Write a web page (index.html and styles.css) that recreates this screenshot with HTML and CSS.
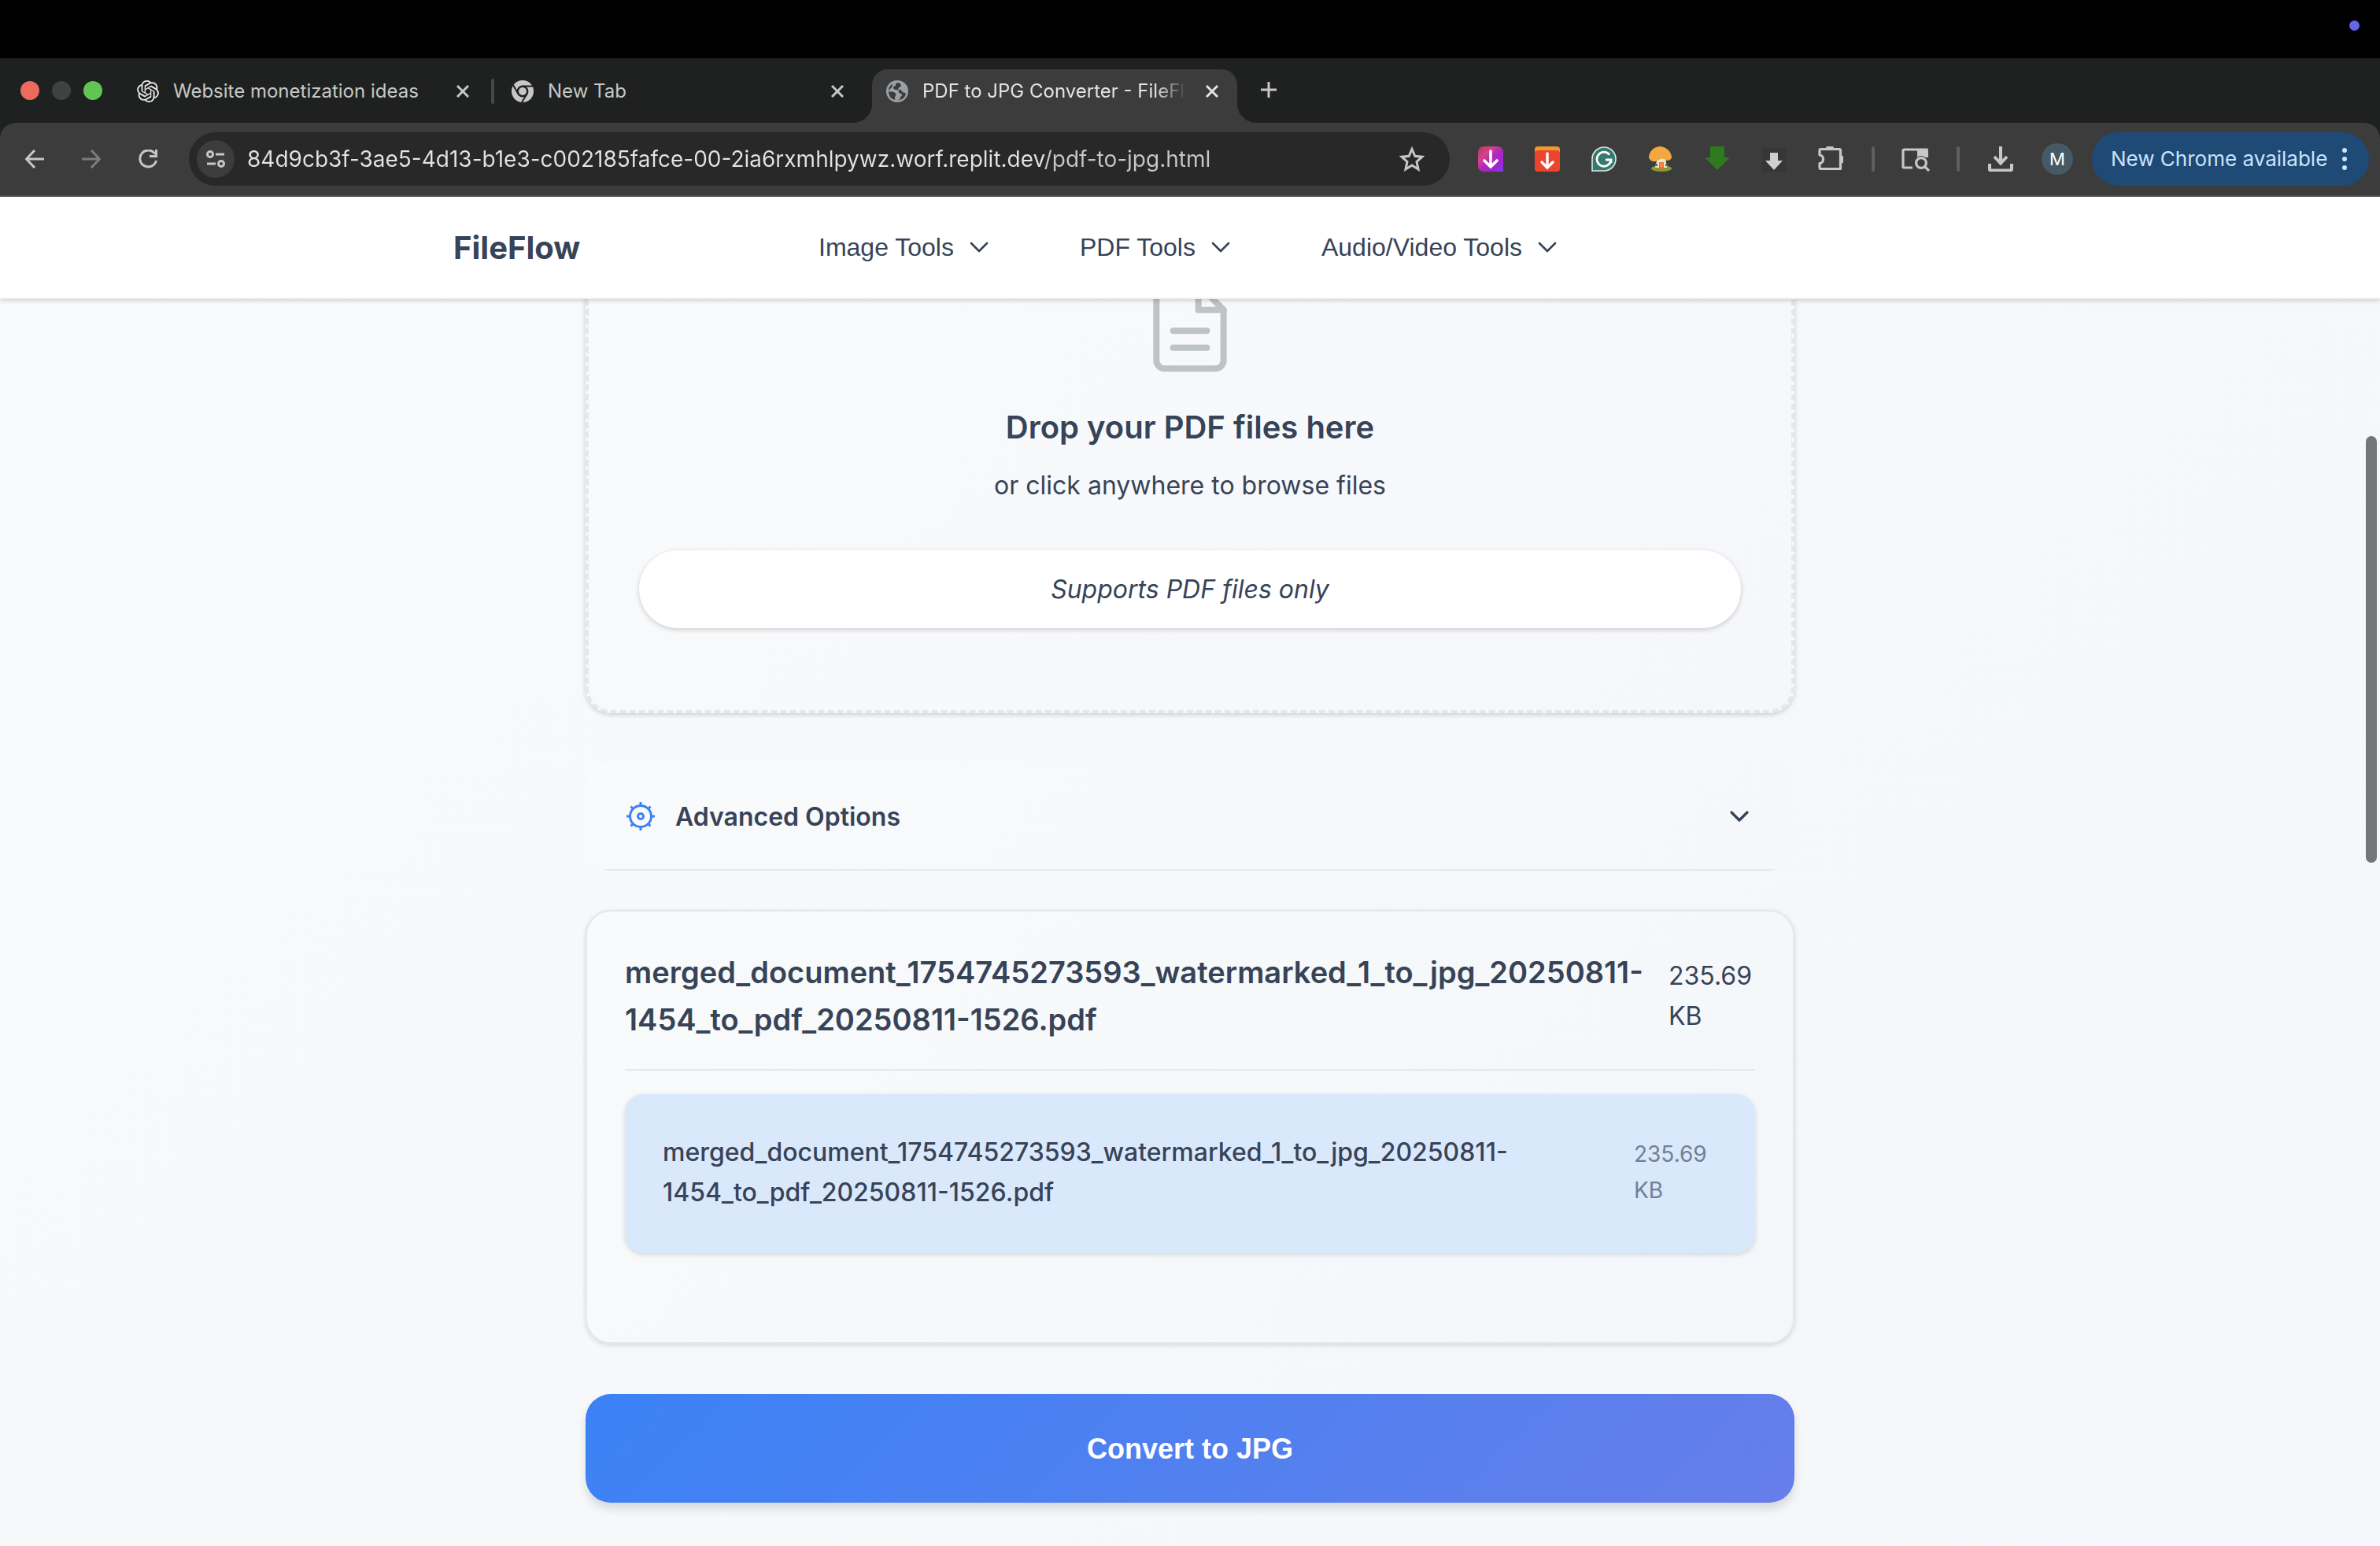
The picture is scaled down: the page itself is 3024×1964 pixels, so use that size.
FILE: index.html
```html
<!DOCTYPE html>
<html lang="en">
<head>
<meta charset="utf-8">
<title>PDF to JPG Converter - FileFlow</title>
<link rel="stylesheet" href="styles.css">
</head>
<body>
<div class="menubar"><span class="menubar-dot"></span></div>

<div class="tabstrip">
  <div class="lights">
    <span class="light light-close"></span>
    <span class="light light-min"></span>
    <span class="light light-max"></span>
  </div>
  <div class="tabs">
    <div class="tab tab-first">
      <svg class="favicon" viewBox="0 0 24 24" fill="#e8e8e8"><path d="M22.2819 9.8211a5.9847 5.9847 0 0 0-.5157-4.9108 6.0462 6.0462 0 0 0-6.5098-2.9A6.0651 6.0651 0 0 0 4.9807 4.1818a5.9847 5.9847 0 0 0-3.9977 2.9 6.0462 6.0462 0 0 0 .7427 7.0966 5.98 5.98 0 0 0 .511 4.9107 6.051 6.051 0 0 0 6.5146 2.9001A5.9847 5.9847 0 0 0 13.2599 24a6.0557 6.0557 0 0 0 5.7718-4.2058 5.9894 5.9894 0 0 0 3.9977-2.9001 6.0557 6.0557 0 0 0-.7475-7.0729zm-9.022 12.6081a4.4755 4.4755 0 0 1-2.8764-1.0408l.1419-.0804 4.7783-2.7582a.7948.7948 0 0 0 .3927-.6813v-6.7369l2.02 1.1686a.071.071 0 0 1 .038.052v5.5826a4.504 4.504 0 0 1-4.4945 4.4944zm-9.6607-4.1254a4.4708 4.4708 0 0 1-.5346-3.0137l.142.0852 4.783 2.7582a.7712.7712 0 0 0 .7806 0l5.8428-3.3685v2.3324a.0804.0804 0 0 1-.0332.0615L9.74 19.9502a4.4992 4.4992 0 0 1-6.1408-1.6464zM2.3408 7.8956a4.485 4.485 0 0 1 2.3655-1.9728V11.6a.7664.7664 0 0 0 .3879.6765l5.8144 3.3543-2.0201 1.1685a.0757.0757 0 0 1-.071 0l-4.8303-2.7865A4.504 4.504 0 0 1 2.3408 7.872zm16.5963 3.8558L13.1038 8.364 15.1192 7.2a.0757.0757 0 0 1 .071 0l4.8303 2.7913a4.4944 4.4944 0 0 1-.6765 8.1042v-5.6772a.79.79 0 0 0-.407-.667zm2.0107-3.0231l-.142-.0852-4.7735-2.7818a.7759.7759 0 0 0-.7854 0L9.409 9.2297V6.8974a.0662.0662 0 0 1 .0284-.0615l4.8303-2.7866a4.4992 4.4992 0 0 1 6.6802 4.66zM8.3065 12.863l-2.02-1.1638a.0804.0804 0 0 1-.038-.0567V6.0742a4.4992 4.4992 0 0 1 7.3757-3.4537l-.142.0805L8.704 5.459a.7948.7948 0 0 0-.3927.6813zm1.0976-2.3654l2.602-1.4998 2.6069 1.4998v2.9994l-2.5974 1.4997-2.6067-1.4997Z"/></svg>
      <span class="tab-title">Website monetization ideas</span>
      <button class="tab-close" aria-label="Close tab"><svg viewBox="0 0 16 16"><path d="M1 1l14 14M15 1L1 15"/></svg></button>
    </div>
    <div class="tab">
      <svg class="favicon" viewBox="0 0 28 28"><circle cx="14" cy="14" r="14" fill="#c7c7c7"/><g fill="none" stroke="#1f2120" stroke-width="2"><path d="M14 7.500H27M8.400 17.200L1.900 6M19.600 17.200L13 28"/></g><circle cx="14" cy="14" r="7.500" fill="#1f2120"/><circle cx="14" cy="14" r="5" fill="#c7c7c7"/></svg>
      <span class="tab-title">New Tab</span>
      <button class="tab-close" aria-label="Close tab"><svg viewBox="0 0 16 16"><path d="M1 1l14 14M15 1L1 15"/></svg></button>
    </div>
    <div class="tab tab-active">
      <svg class="favicon" viewBox="0 0 28 28"><circle cx="14" cy="14" r="14" fill="#9aa0a6"/><path d="M16 3c-3 0-4 1-4 3s-3 1-3 3 1 3 4 3 3 1 3 3 3 1 4 3-2 2-2 4-1 3-4 3c4 1 10-2 11-8-1-2-4-1-5-3s-2-2-4-2 0-3 2-4 1-3-2-5zM3 14c3 1 8 0 9 3s-1 3-1 5 0 3 1 3C6 24 3 20 3 14zM9 4C5 6 3 9 3 13c2-2 3-3 4-4s0-3 2-5z" fill="#3c3c3c"/></svg>
      <span class="tab-title">PDF to JPG Converter - FileFlow</span>
      <button class="tab-close" aria-label="Close tab"><svg viewBox="0 0 16 16"><path d="M1 1l14 14M15 1L1 15"/></svg></button>
    </div>
  </div>
  <button class="new-tab" aria-label="New tab"><svg viewBox="0 0 20 20"><path d="M10 0v20M0 10h20"/></svg></button>
</div>

<div class="toolbar-wrap">
<div class="toolbar">
  <div class="tool-group">
    <button class="tool" aria-label="Back"><svg viewBox="0 0 24 24" class="line"><path d="M24 12H2M12 1L1.500 12 12 23"/></svg></button>
    <button class="tool tool-off" aria-label="Forward"><svg viewBox="0 0 24 24" class="line"><path d="M0 12h22M12 1l10.500 11L12 23"/></svg></button>
    <button class="tool" aria-label="Reload"><svg viewBox="0 0 24 24" class="line"><path d="M21 5.500A10.500 10.500 0 1 0 22.500 14"/><path d="M22.500 0v8.500H14"/></svg></button>
  </div>
  <div class="omnibox">
    <button class="site-info" aria-label="Site information"><svg viewBox="0 0 24 24" class="line"><circle cx="5" cy="6" r="3.500"/><path d="M12 6h11M1 18h11"/><circle cx="19" cy="18" r="3.500"/></svg></button>
    <input class="url" type="text" aria-label="Address" value="84d9cb3f-3ae5-4d13-b1e3-c002185fafce-00-2ia6rxmhlpywz.worf.replit.dev/pdf-to-jpg.html">
    <button class="star" aria-label="Bookmark this page"><svg viewBox="0 0 32 32" class="line"><path d="M16 3.500l3.800 8.800 9.200.9-7 6.300 2 9.500-8-5-8 5 2-9.500-7-6.300 9.200-.9z"/></svg></button>
  </div>
  <div class="tool-group">
    <button class="tool" aria-label="Media downloader"><svg class="ext" viewBox="0 0 32 32"><defs><linearGradient id="ig" x1="0" y1="0" x2="1" y2="1"><stop offset="0" stop-color="#b5365c"/><stop offset=".3" stop-color="#d8418a"/><stop offset=".5" stop-color="#b129bd"/><stop offset=".75" stop-color="#a024cf"/><stop offset="1" stop-color="#7a3cf5"/></linearGradient></defs><path d="M7 0h18a7 7 0 0 1 7 7v25H7a7 7 0 0 1-7-7V7a7 7 0 0 1 7-7z" fill="url(#ig)"/><path d="M16 6v20M8 18l8 8 8-8" fill="none" stroke="#fff" stroke-width="3.600" stroke-linecap="round"/></svg></button>
    <button class="tool" aria-label="Video downloader"><svg class="ext" viewBox="0 0 32 32"><rect width="32" height="20" rx="4" fill="#ee9a30"/><rect y="5" width="32" height="27" rx="4" fill="#ec452d"/><path d="M16 9v17M9 20l7 7 7-7" fill="none" stroke="#fff" stroke-width="3.400" stroke-linecap="round"/></svg></button>
    <button class="tool" aria-label="Writing assistant"><svg class="ext" viewBox="0 0 32 32"><path d="M1 31V16a15 15 0 1 1 15 15z" fill="#357a6c" stroke="#dfe9e7" stroke-width="1.600"/><path d="M23 10.500a9 9 0 1 0 2 6.500h-7M25 17v4" fill="none" stroke="#fff" stroke-width="2.800"/></svg></button>
    <button class="tool" aria-label="Mushroom"><svg class="ext" viewBox="0 0 32 32"><ellipse cx="17" cy="28" rx="13" ry="4" fill="#8b9a2e"/><path d="M12 14h10l2 13H9z" fill="#eee3cd"/><path d="M1 13C2 5 9 0 15 0s14 5 15 13c0 4-3 5-7 5-2-2-5-3-7-2-2 1-4 2-6 3-5 1-9-2-9-6z" fill="#f2a741"/><rect x="14" y="20" width="6" height="9" fill="#ef6b3f"/><path d="M9 22h3v3H9zM22 22h3v3h-3z" fill="#2f7f7a"/><path d="M15 22h4M15 25h4" stroke="#f7c35c"/></svg></button>
    <button class="tool" aria-label="Green downloader"><svg class="ext" viewBox="0 0 32 32"><path d="M7 0h18v14h7L16 30 0 14h7z" fill="#2f7a1f"/></svg></button>
    <button class="tool" aria-label="Grey downloader"><svg class="ext" viewBox="0 0 32 32"><rect x="1" y="2" width="30" height="30" rx="3" fill="#363636"/><path d="M11 8h10v10h6L16 30 5 18h6z" fill="#cfcfcf"/></svg></button>
    <button class="tool" aria-label="Extensions"><svg class="ext" viewBox="0 0 32 32"><path d="M2 5a1.500 1.500 0 0 1 1.500-1.500H27A1.500 1.500 0 0 1 28.500 5v23.500H3.500A1.500 1.500 0 0 1 2 27v-5.500c6 0 6-10.500 0-10.500z" fill="none" stroke="#c7c7c7" stroke-width="3.200" stroke-linejoin="round"/><path d="M10.500 2.500a4.500 4.500 0 0 1 9 0zM29.500 12a4.500 4.500 0 0 1 0 9z" fill="#c7c7c7" stroke="#c7c7c7"/></svg></button>
  </div>
  <span class="divider"></span>
  <button class="tool" aria-label="Search side panel"><svg class="ext-wide" viewBox="0 0 36 32"><path d="M14 27H3.500A1.500 1.500 0 0 1 2 25.500v-20A1.500 1.500 0 0 1 3.500 4H32v10" fill="none" stroke="#c7c7c7" stroke-width="3.200"/><path d="M20 3h11a3 3 0 0 1 3 3v8H20z" fill="#c7c7c7"/><circle cx="25" cy="21" r="9" fill="#3c3c3c"/><circle cx="25" cy="21" r="6.400" fill="none" stroke="#c7c7c7" stroke-width="3.200"/><path d="M29 25l6 6" stroke="#c7c7c7" stroke-width="3.200"/></svg></button>
  <span class="divider"></span>
  <button class="tool" aria-label="Downloads"><svg class="ext" viewBox="0 0 32 32"><path d="M16 0v20M8 13l8 8.500 8-8.500M2 22v6.500a2 2 0 0 0 2 2h24a2 2 0 0 0 2-2V22" fill="none" stroke="#c7c7c7" stroke-width="4"/></svg></button>
  <button class="tool" aria-label="Profile"><span class="avatar">M</span></button>
  <button class="update"><span>New Chrome available</span><svg viewBox="0 0 8 28"><circle cx="4" cy="3" r="3"/><circle cx="4" cy="14" r="3"/><circle cx="4" cy="25" r="3"/></svg></button>
</div>
</div>

<div class="page">
  <header class="site-header">
    <div class="header-inner">
      <a class="logo" href="#">FileFlow</a>
      <nav class="nav">
        <a class="nav-link" href="#">Image Tools <svg class="chevron" viewBox="0 0 24 24"><path d="M6 9l6 6 6-6"/></svg></a>
        <a class="nav-link" href="#">PDF Tools <svg class="chevron" viewBox="0 0 24 24"><path d="M6 9l6 6 6-6"/></svg></a>
        <a class="nav-link" href="#">Audio/Video Tools <svg class="chevron" viewBox="0 0 24 24"><path d="M6 9l6 6 6-6"/></svg></a>
      </nav>
    </div>
  </header>

  <main class="content">
    <section class="dropzone">
      <svg class="file-icon" viewBox="0 0 24 24"><path d="M14 2H6a2 2 0 0 0-2 2v16a2 2 0 0 0 2 2h12a2 2 0 0 0 2-2V8z"/><path d="M14 2v6h6M16 13H8M16 17H8"/></svg>
      <h2 class="drop-title">Drop your PDF files here</h2>
      <p class="drop-text">or click anywhere to browse files</p>
      <p class="drop-note">Supports PDF files only</p>
    </section>

    <button class="advanced">
      <svg class="gear" viewBox="0 0 36 36"><circle cx="18" cy="18" r="13.500"/><circle cx="18" cy="18" r="3.500"/><path d="M18 0v5M18 31v5M0 18h5M31 18h5M5.500 5.500l3 3M27.500 27.500l3 3M5.500 30.500l3-3M27.500 8.500l3-3"/></svg>
      <span class="advanced-label">Advanced Options</span>
      <svg class="chevron chevron-bold" viewBox="0 0 24 24"><path d="M6 9l6 6 6-6"/></svg>
    </button>

    <section class="file-card">
      <div class="file-head">
        <h3 class="file-title">merged_document_1754745273593_watermarked_1_to_jpg_20250811-1454_to_pdf_20250811-1526.pdf</h3>
        <span class="file-size">235.69 KB</span>
      </div>
      <div class="file-item">
        <span class="item-name">merged_document_1754745273593_watermarked_1_to_jpg_20250811-1454_to_pdf_20250811-1526.pdf</span>
        <span class="item-size">235.69 KB</span>
      </div>
    </section>

    <button class="convert">Convert to JPG</button>
  </main>
  <div class="scroll-thumb"></div>
</div>
</body>
</html>
```
FILE: styles.css
```css
* { box-sizing: border-box; margin: 0; }

body {
  display: flex;
  flex-direction: column;
  height: 100vh;
  overflow: hidden;
  background: #000;
  font-family: Inter, "Noto Sans", sans-serif;
  font-size: 32px;
  line-height: 51px;
  color: #374357;
}

button {
  padding: 0;
  border: 0;
  background: none;
  color: inherit;
  font: inherit;
}

a { color: inherit; text-decoration: none; }
svg { display: block; flex: none; }

/* Screen menu bar */
.menubar {
  display: flex;
  flex: none;
  align-items: center;
  justify-content: flex-end;
  height: 74px;
  padding: 0 26px 10px 0;
}
.menubar-dot { width: 13px; height: 13px; border-radius: 50%; background: #6663ec; }

/* Tab strip */
.tabstrip {
  display: flex;
  flex: none;
  align-items: flex-end;
  height: 82px;
  padding-left: 26px;
  background: #1f2120;
}
.lights { display: flex; gap: 16px; padding: 0 26px 29px 0; }
.light { width: 24px; height: 24px; border-radius: 50%; }
.light-close { background: #ed6a5e; }
.light-min { background: #404241; }
.light-max { background: #61c554; }

.tabs { display: flex; gap: 12px; }
.tab {
  position: relative;
  display: flex;
  align-items: center;
  width: 464px;
  height: 68px;
  padding: 0 16px 12px 18px;
  color: #c7c7c7;
}
.tab-first::after {
  content: "";
  position: absolute;
  right: -8px;
  top: 12px;
  width: 4px;
  height: 32px;
  border-radius: 2px;
  background: #474747;
}
.favicon { width: 28px; height: 28px; margin-right: 18px; }
.tab-title {
  flex: 1;
  overflow: hidden;
  margin-right: 16px;
  font-size: 24px;
  line-height: 32px;
  white-space: nowrap;
}
.tab-close { display: flex; align-items: center; justify-content: center; width: 32px; height: 32px; }
.tab-close svg { width: 16px; height: 16px; fill: none; stroke: currentColor; stroke-width: 3; }
.tab-active { border-radius: 20px 20px 0 0; background: #3c3c3c; color: #e3e3e3; }
.tab-active .tab-title { -webkit-mask-image: linear-gradient(90deg, #000 88%, transparent); mask-image: linear-gradient(90deg, #000 88%, transparent); }
.tab-active::before,
.tab-active::after {
  content: "";
  position: absolute;
  bottom: 0;
  width: 24px;
  height: 24px;
}
.tab-active::before { right: 100%; background: radial-gradient(circle at 0 0, transparent 24px, #3c3c3c 24px); }
.tab-active::after { left: 100%; background: radial-gradient(circle at 100% 0, transparent 24px, #3c3c3c 24px); }
.new-tab { padding: 0 0 32px 30px; }
.new-tab svg { width: 20px; height: 20px; stroke: #c7c7c7; stroke-width: 3; }

/* Toolbar */
.toolbar-wrap { flex: none; background: #1f2120; }
.toolbar {
  display: flex;
  align-items: center;
  padding: 12px 14px 12px 8px;
  border-bottom: 2px solid #4a4a4a;
  border-radius: 20px 20px 0 0;
  background: #3c3c3c;
  color: #c7c7c7;
}
.tool-group { display: flex; }
.tool { display: flex; flex: none; align-items: center; justify-content: center; width: 72px; height: 68px; }
.tool-off { color: #7c7c7c; }
.line { width: 24px; height: 24px; fill: none; stroke: currentColor; stroke-width: 3; }
.ext { width: 32px; height: 32px; }
.ext-wide { width: 36px; height: 32px; }
.omnibox {
  display: flex;
  flex: 1;
  align-items: center;
  height: 68px;
  margin: 0 16px;
  padding: 0 32px 0 10px;
  border-radius: 34px;
  background: #282828;
}
.site-info {
  display: flex;
  align-items: center;
  justify-content: center;
  width: 48px;
  height: 48px;
  border-radius: 50%;
  background: #3c3c3c;
}
.url {
  flex: 1;
  height: 48px;
  margin: 0 16px;
  padding: 0;
  border: 0;
  outline: 0;
  background: linear-gradient(90deg, #e3e3e3 1013px, #c7c7c7 1013px);
  -webkit-background-clip: text;
  background-clip: text;
  color: transparent;
  font: 28px Inter, sans-serif;
}
.star svg { width: 32px; height: 32px; }
.divider { flex: none; width: 4px; height: 32px; margin: 0 16px; border-radius: 2px; background: #5e5e5e; }
.avatar {
  width: 40px;
  height: 40px;
  border-radius: 50%;
  background: #455a64;
  color: #fff;
  font-size: 22px;
  line-height: 40px;
  text-align: center;
}
.update {
  display: flex;
  flex: none;
  align-items: center;
  justify-content: space-between;
  width: 352px;
  height: 68px;
  margin-left: 8px;
  padding: 0 27px 0 24px;
  border-radius: 34px;
  background: #1f4a75;
  color: #c9e4fc;
  font-size: 26px;
  line-height: 32px;
  white-space: nowrap;
}
.update svg { width: 8px; height: 28px; fill: currentColor; }

/* Web page */
.page {
  position: relative;
  flex: 1;
  overflow: hidden;
  background: linear-gradient(135deg, #f8fafb, #f4f6f9);
}
.site-header {
  position: relative;
  z-index: 1;
  border-bottom: 2px solid #f0f1f3;
  background: #fff;
  box-shadow: 0 2px 6px rgba(0, 0, 0, .16);
}
.header-inner {
  display: grid;
  grid-template-columns: 464px auto;
  align-items: center;
  justify-content: start;
  max-width: 1872px;
  height: 128px;
  margin: 0 auto;
}
.logo { font-size: 40px; font-weight: 700; }
.nav { display: flex; gap: 108px; }
.nav-link {
  display: flex;
  align-items: center;
  gap: 12px;
  font-family: "Liberation Sans", Arial, sans-serif;
}
.chevron { width: 40px; height: 40px; fill: none; stroke: currentColor; stroke-width: 1.6; stroke-linecap: round; stroke-linejoin: round; }
.chevron-bold { stroke-width: 2; }

.content { max-width: 1536px; margin: -97px auto 0; }
.dropzone {
  padding: 64px 64px 104px;
  border: 4px dashed #e2e8f0;
  border-radius: 32px;
  background: linear-gradient(135deg, #f8fafb, #f5f7fb);
  box-shadow: 0 2px 6px rgba(0, 0, 0, .18);
  text-align: center;
}
.file-icon {
  width: 128px;
  height: 128px;
  margin: 0 auto 32px;
  fill: none;
  stroke: #bdc3c7;
  stroke-width: 1.5;
  stroke-linecap: round;
  stroke-linejoin: round;
}
.drop-title { margin-bottom: 16px; font-size: 40px; font-weight: 600; line-height: 64px; }
.drop-text { margin-bottom: 57px; }
.drop-note {
  padding: 24px;
  border-radius: 50px;
  background: #fff;
  box-shadow: 0 2px 6px rgba(0, 0, 0, .18);
  font-style: italic;
}

/* The bottom rule stops short of the rounded corners */
.advanced {
  display: flex;
  align-items: center;
  width: 100%;
  height: 138px;
  margin: 62px 0 50px;
  padding: 0 50px 0 52px;
  border-radius: 32px;
  background:
    linear-gradient(#e2e8f0, #e2e8f0) center bottom / calc(100% - 44px) 2px no-repeat,
    linear-gradient(135deg, #f8fafb, #f5f7fa);
  text-align: left;
}
.gear { width: 36px; height: 36px; fill: none; stroke: #3b82f6; stroke-width: 3; }
.advanced-label { flex: 1; margin-left: 26px; font-weight: 600; }

.file-card {
  padding: 47px 48px 113px;
  border: 2px solid #e2e8f0;
  border-radius: 32px;
  background: linear-gradient(135deg, #f8fafb, #f4f7fa);
  box-shadow: 0 2px 6px rgba(0, 0, 0, .14);
}
.file-head {
  display: flex;
  align-items: center;
  gap: 32px;
  padding-bottom: 33px;
  border-bottom: 2px solid #e2e8f0;
}
.file-title { flex: 1; font-size: 38px; font-weight: 600; line-height: 60px; }
.file-size { width: 110px; }
.file-item {
  display: flex;
  align-items: center;
  gap: 32px;
  margin-top: 30px;
  padding: 48px 48px 52px;
  border-radius: 24px;
  background: #dae8fc;
  box-shadow: 0 2px 6px rgba(0, 0, 0, .14);
}
.item-name { flex: 1; font-weight: 500; }
.item-size { width: 106px; color: #718096; font-size: 28px; line-height: 46px; }

.convert {
  width: 100%;
  height: 138px;
  margin-top: 64px;
  border-radius: 32px;
  background: linear-gradient(135deg, #3b82f6, #667eea);
  box-shadow: 0 8px 12px rgba(0, 0, 0, .12);
  color: #fff;
  font-family: "Liberation Sans", Arial, sans-serif;
  font-size: 36px;
  font-weight: 700;
}

.scroll-thumb {
  position: absolute;
  top: 304px;
  right: 4px;
  width: 14px;
  height: 542px;
  border-radius: 7px;
  background: #747576;
}
```
